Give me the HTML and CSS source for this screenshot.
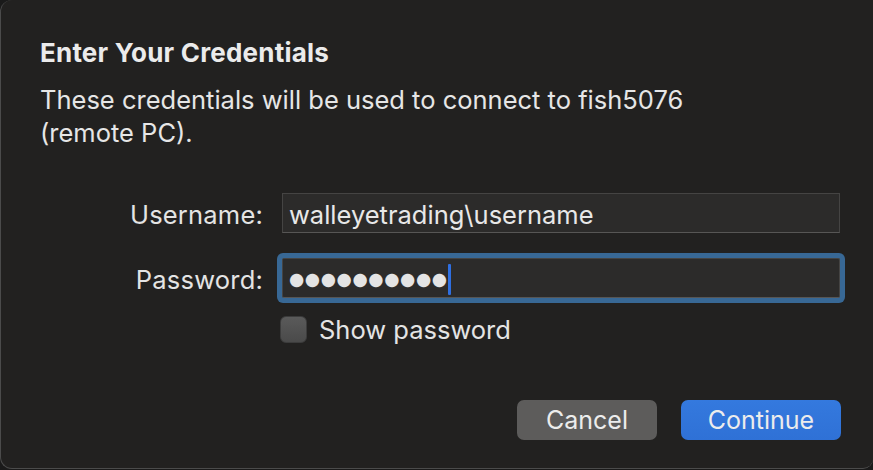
FILE: index.html
```html
<!DOCTYPE html>
<html lang="en">
<head>
<meta charset="utf-8">
<title>Enter Your Credentials</title>
<link rel="stylesheet" href="styles.css">
</head>
<body>
<div class="dialog">
  <h1 class="title">Enter Your Credentials</h1>
  <p class="message">These credentials will be used to connect to fish5076<br>(remote PC).</p>
  <div class="form">
    <label class="label">Username:</label>
    <div class="field">walleyetrading\username</div>
    <label class="label">Password:</label>
    <div class="field focused"><span class="dots">●●●●●●●●●●</span><span class="caret"></span></div>
    <div></div>
    <div class="check-row"><span class="checkbox"></span><span class="check-label">Show password</span></div>
  </div>
  <div class="buttons">
    <button class="btn cancel">Cancel</button>
    <button class="btn primary">Continue</button>
  </div>
</div>
</body>
</html>
```
FILE: styles.css
```css
html, body {
  margin: 0;
  padding: 0;
  width: 873px;
  height: 470px;
  overflow: hidden;
  background: #1a1a1a;
}
body {
  font-family: "Inter", "Liberation Sans", sans-serif;
  color: #e6e6e6;
}
.dialog {
  box-sizing: border-box;
  width: 873px;
  height: 469px;
  background: #222120;
  border-left: 1px solid #4b4b4b;
  border-bottom: 1px solid #4b4b4b;
  border-radius: 12px 0 10px 12px;
  display: flex;
  flex-direction: column;
  padding: 38px 32px 28px 39px;
}
.title {
  margin: 0;
  font-size: 26px;
  line-height: 30px;
  font-weight: 700;
  letter-spacing: 0.2px;
  color: #ebebeb;
}
.message {
  margin: 15px 0 0;
  font-size: 25.5px;
  line-height: 33px;
  color: #e6e6e6;
}
.form {
  margin-top: 44px;
  display: grid;
  grid-template-columns: 223px 558px;
  column-gap: 19px;
  row-gap: 25px;
  align-items: center;
}
.label {
  text-align: right;
  font-size: 25.5px;
  letter-spacing: 0.2px;
  color: #e4e4e4;
  padding-top: 3px;
}
.field {
  box-sizing: border-box;
  height: 40px;
  background: #2c2b2a;
  border: 1px solid #454443;
  border-bottom-color: #575655;
  padding: 2px 6px 0;
  display: flex;
  align-items: center;
  font-size: 25.5px;
  color: #e8e8e8;
}
.field.focused {
  box-shadow: 0 0 0 5px #386895;
  border-radius: 2px;
}
.dots {
  font-family: "DejaVu Sans", sans-serif;
  font-size: 17.5px;
  letter-spacing: 0.6px;
  color: #e4e4e4;
}
.caret {
  width: 3px;
  height: 31px;
  background: #2f6fe0;
  border-radius: 1px;
}
.check-row {
  margin-top: -9px;
  margin-left: -2px;
  display: flex;
  align-items: center;
  gap: 12px;
}
.checkbox {
  box-sizing: border-box;
  width: 27px;
  height: 27px;
  border-radius: 6px;
  background: linear-gradient(#5a5a5a, #4a4a4a);
  border: 1px solid #3c3c3c;
}
.check-label {
  font-size: 25.5px;
  color: #e4e4e4;
}
.buttons {
  margin-top: auto;
  display: flex;
  justify-content: flex-end;
  gap: 24px;
}
.btn {
  height: 40px;
  border: none;
  border-radius: 7px;
  font-family: "Inter", "Liberation Sans", sans-serif;
  font-size: 25px;
  color: #ececec;
  padding: 0;
}
.cancel {
  width: 140px;
  background: #5d5c5b;
}
.primary {
  width: 160px;
  background: linear-gradient(#3479de, #2f71d6);
}
```
